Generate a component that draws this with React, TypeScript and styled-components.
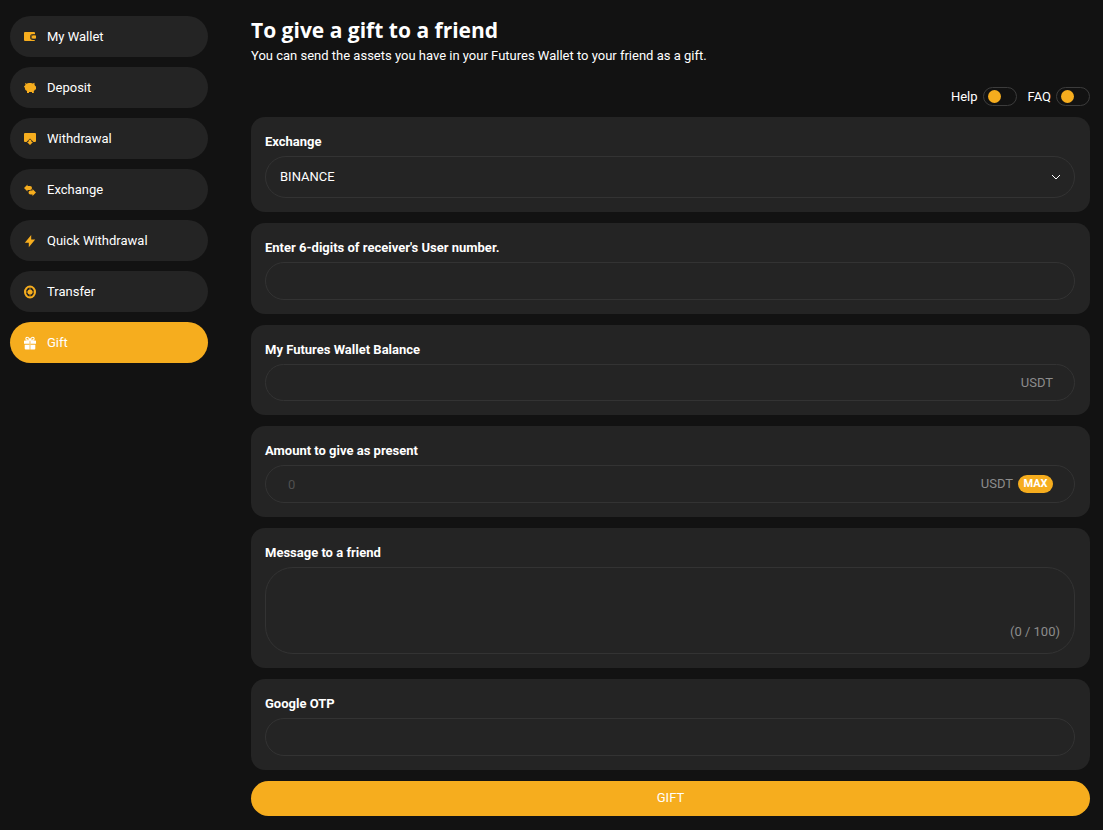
import React, { useState } from "react";
import styled, { createGlobalStyle } from "styled-components";

const orange = "#f6ad1e";
const panel = "#242424";
const line = "#333333";

const GlobalStyle = createGlobalStyle`
  *, *::before, *::after { box-sizing: border-box; }
  body {
    margin: 0;
    background: #121212;
    color: #ffffff;
    font-family: Roboto, "Noto Sans", sans-serif;
    font-size: 13px;
    line-height: 20px;
  }
  button, input, select, textarea { font: inherit; color: inherit; }
`;

const Page = styled.div`
  display: flex;
  align-items: flex-start;
  gap: 43px;
  padding: 16px 13px 14px 10px;
`;

const Sidebar = styled.nav`
  flex: 0 0 198px;
  display: flex;
  flex-direction: column;
  gap: 10px;
`;

const NavLink = styled.a<{ $active: boolean }>`
  display: flex;
  align-items: center;
  gap: 11px;
  height: 41px;
  padding: 0 14px;
  border-radius: 21px;
  background: ${(p) => (p.$active ? orange : panel)};
  color: #ffffff;
  text-decoration: none;

  svg {
    flex: none;
    width: 12px;
    height: 14px;
    color: ${(p) => (p.$active ? "#ffffff" : orange)};
  }
`;

const Main = styled.main`
  flex: 1;
  min-width: 0;
`;

const Title = styled.h1`
  margin: 0;
  font-family: "Open Sans", "Noto Sans", sans-serif;
  font-size: 21px;
  line-height: 28px;
  font-weight: 700;
`;

const Lead = styled.p`
  margin: 2px 0 21px;
`;

const Toggles = styled.div`
  display: flex;
  justify-content: flex-end;
  gap: 11px;
  height: 19px;
  margin-bottom: 11px;
`;

const ToggleLabel = styled.label`
  display: flex;
  align-items: center;
  gap: 5px;
`;

const Switch = styled.input`
  appearance: none;
  display: flex;
  align-items: center;
  width: 34px;
  height: 19px;
  margin: 0;
  padding: 0 4px;
  border: 1px solid #3c3c3c;
  border-radius: 10px;

  &::before {
    content: "";
    width: 13px;
    height: 13px;
    border-radius: 50%;
    background: ${orange};
  }
  &:checked {
    justify-content: flex-end;
  }
`;

const Form = styled.form`
  display: flex;
  flex-direction: column;
  gap: 11px;
`;

const Card = styled.section`
  padding: 15px 15px 14px 14px;
  border-radius: 14px;
  background: ${panel};
`;

const FieldLabel = styled.label`
  display: block;
  margin-bottom: 4px;
  font-weight: 700;
`;

const Control = styled.div<{ $height: number; $radius: number; $bottom?: boolean }>`
  display: flex;
  align-items: ${(p) => (p.$bottom ? "flex-end" : "center")};
  height: ${(p) => p.$height}px;
  padding-right: 14px;
  border: 1px solid ${line};
  border-radius: ${(p) => p.$radius}px;
  color: #8c8c8c;

  svg {
    flex: none;
    color: #ffffff;
    pointer-events: none;
  }
`;

const Select = styled.select`
  appearance: none;
  flex: 1;
  height: 100%;
  padding: 0 14px;
  border: 0;
  outline: 0;
  background: transparent;
  color: #ffffff;
`;

const TextInput = styled.input`
  flex: 1;
  min-width: 0;
  height: 100%;
  padding: 0 22px;
  border: 0;
  outline: 0;
  background: transparent;
  color: #ffffff;

  &::placeholder {
    color: #505050;
    opacity: 1;
  }
`;

const TextArea = styled.textarea`
  flex: 1;
  height: 100%;
  padding: 14px 22px;
  border: 0;
  outline: 0;
  resize: none;
  background: transparent;
  color: #ffffff;
`;

const Units = styled.span`
  display: flex;
  align-items: center;
  gap: 5px;
  padding-right: 7px;
`;

const MaxButton = styled.button`
  width: 35px;
  height: 18px;
  padding: 0;
  border: 0;
  border-radius: 9px;
  background: ${orange};
  color: #ffffff;
  font-size: 11px;
  line-height: 18px;
  font-weight: 700;
`;

const Counter = styled.span`
  padding-bottom: 11px;
`;

const Submit = styled.button`
  height: 35px;
  padding: 0 0 2px;
  border: 0;
  border-radius: 18px;
  background: ${orange};
  color: #ffffff;
`;

const WalletIcon = () => (
  <svg viewBox="0 0 12 14" fill="currentColor" aria-hidden="true">
    <path d="M1 2h9q1 0 1 1v1H9a3 3 0 0 0 0 6h2q0 1-1 1H1q-1 0-1-1V3q0-1 1-1z" />
    <path d="M8.500 4.500H11V9H8.500a2.250 2.250 0 0 1 0-4.500z" opacity=".35" />
    <path d="M9.200 5.500H12v3H9.200a1.500 1.500 0 0 1 0-3z" />
  </svg>
);

const PiggyIcon = () => (
  <svg viewBox="0 0 12 13" fill="currentColor" aria-hidden="true">
    <path d="M1 1.500l1.500.7Q3.500 1.500 5 1.500h2q1 0 1.800.4L10.500 1.300v2q.5.600.8 1.400h.7v3.300h-1q-.4 1-1.200 1.600v1.900H8v-1.100q-.8.200-1.500.2-.7 0-1.500-.2v1.100H3v-1.900Q.7 8.500.7 6 0 5.500 0 4.200l.9.200q.2-.8.7-1.400Q1 2.500 1 1.500z" />
  </svg>
);

const WithdrawIcon = () => (
  <svg viewBox="0 0 12 14" fill="currentColor" aria-hidden="true">
    <path d="M1 1h10q1 0 1 1v7q0 1-1 1H9.500L6 6.500 2.500 10H1Q0 10 0 9V2q0-1 1-1z" />
    <path d="M6 7.300l1.500 1.500v1.200H9L6 13 3 10H4.500V8.800z" />
  </svg>
);

const ExchangeIcon = () => (
  <svg viewBox="0 0 12 14" fill="currentColor" aria-hidden="true">
    <path d="M0 5L3.500 1.500V3H6q2 0 2 2T6 7H3.500v1.500z" />
    <path d="M12 9.500L8.500 6v1.500H6.500q-2 0-2 2t2 2h2V13z" />
  </svg>
);

const BoltIcon = () => (
  <svg viewBox="0 0 12 14" fill="currentColor" aria-hidden="true">
    <path d="M7.200 1v4.500h4L4.800 13.200V8.700H.8z" />
  </svg>
);

const TransferIcon = () => (
  <svg viewBox="0 0 12 14" aria-hidden="true">
    <ellipse cx="6" cy="7" rx="5" ry="5.500" fill="none" stroke="currentColor" strokeWidth="2" />
    <circle cx="6" cy="7" r="2.500" fill="currentColor" />
    <path d="M6 2v10M1.500 7h9" stroke="currentColor" strokeWidth="1" opacity=".6" />
  </svg>
);

const GiftIcon = () => (
  <svg viewBox="0 0 12 14" aria-hidden="true">
    <path
      d="M6 4.200C5 1.500 3.500.900 2.500 1.400s-.8 2.700.5 2.700h6c1.300 0 1.500-2.200.5-2.700S7 1.500 6 4.200z"
      fill="none"
      stroke="currentColor"
      strokeWidth="1.100"
    />
    <path
      d="M.5 4.500h5v3.200H0V5zM6.500 4.500h5l.5.500v2.700H6.500zM.7 8.700h4.800v4.800H1.700q-1 0-1-1zM6.500 8.700h4.800v3.800q0 1-1 1H6.500z"
      fill="currentColor"
    />
    <path d="M5.500 4.500h1v9h-1z" fill="currentColor" opacity=".5" />
  </svg>
);

const navItems = [
  { label: "My Wallet", Icon: WalletIcon },
  { label: "Deposit", Icon: PiggyIcon },
  { label: "Withdrawal", Icon: WithdrawIcon },
  { label: "Exchange", Icon: ExchangeIcon },
  { label: "Quick Withdrawal", Icon: BoltIcon },
  { label: "Transfer", Icon: TransferIcon },
  { label: "Gift", Icon: GiftIcon },
];

export default function App() {
  const [message, setMessage] = useState("");

  return (
    <>
      <GlobalStyle />
      <Page>
        <Sidebar aria-label="Wallet">
          {navItems.map(({ label, Icon }) => (
            <NavLink key={label} href="#" $active={label === "Gift"}>
              <Icon />
              {label}
            </NavLink>
          ))}
        </Sidebar>
        <Main>
          <Title>To give a gift to a friend</Title>
          <Lead>You can send the assets you have in your Futures Wallet to your friend as a gift.</Lead>
          <Toggles>
            <ToggleLabel>
              Help
              <Switch type="checkbox" />
            </ToggleLabel>
            <ToggleLabel>
              FAQ
              <Switch type="checkbox" />
            </ToggleLabel>
          </Toggles>
          <Form onSubmit={(e) => e.preventDefault()}>
            <Card>
              <FieldLabel htmlFor="exchange">Exchange</FieldLabel>
              <Control $height={42} $radius={21}>
                <Select id="exchange">
                  <option>BINANCE</option>
                </Select>
                <svg width="8" height="8" viewBox="0 0 8 8" aria-hidden="true">
                  <path d="M0 2l4 4 4-4" fill="none" stroke="currentColor" />
                </svg>
              </Control>
            </Card>
            <Card>
              <FieldLabel htmlFor="receiver">Enter 6-digits of receiver's User number.</FieldLabel>
              <Control $height={38} $radius={19}>
                <TextInput id="receiver" maxLength={6} />
              </Control>
            </Card>
            <Card>
              <FieldLabel htmlFor="balance">My Futures Wallet Balance</FieldLabel>
              <Control $height={37} $radius={19}>
                <TextInput id="balance" readOnly />
                <Units>USDT</Units>
              </Control>
            </Card>
            <Card>
              <FieldLabel htmlFor="amount">Amount to give as present</FieldLabel>
              <Control $height={38} $radius={19}>
                <TextInput id="amount" placeholder="0" />
                <Units>
                  USDT
                  <MaxButton type="button">MAX</MaxButton>
                </Units>
              </Control>
            </Card>
            <Card>
              <FieldLabel htmlFor="message">Message to a friend</FieldLabel>
              <Control $height={87} $radius={28} $bottom>
                <TextArea
                  id="message"
                  maxLength={100}
                  value={message}
                  onChange={(e) => setMessage(e.target.value)}
                />
                <Counter>({message.length} / 100)</Counter>
              </Control>
            </Card>
            <Card>
              <FieldLabel htmlFor="otp">Google OTP</FieldLabel>
              <Control $height={38} $radius={19}>
                <TextInput id="otp" />
              </Control>
            </Card>
            <Submit type="submit">GIFT</Submit>
          </Form>
        </Main>
      </Page>
    </>
  );
}
